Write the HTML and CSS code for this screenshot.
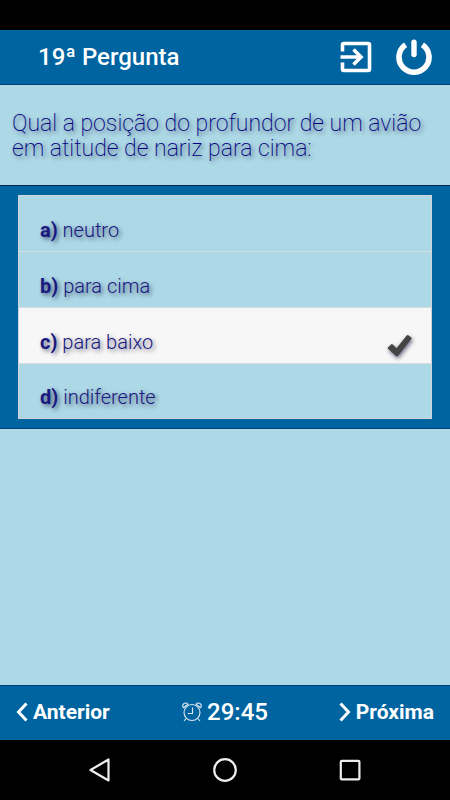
FILE: index.html
```html
<!DOCTYPE html>
<html lang="pt-BR">
<head>
<meta charset="utf-8">
<meta name="viewport" content="width=device-width, initial-scale=1">
<title>19ª Pergunta</title>
<link rel="stylesheet" href="styles.css">
</head>
<body>
<div class="status-bar"></div>
<header class="header">
  <h1 class="title">19ª Pergunta</h1>
  <button class="icon-button" type="button" aria-label="Sair">
    <svg width="32" height="32" viewBox="0 0 32 32" fill="none" stroke="#fff" stroke-width="3.6">
      <path d="M2.5 10.5V4Q2.5 2.5 4 2.5H28Q29.5 2.5 29.5 4V28Q29.5 29.5 28 29.5H4Q2.5 29.5 2.5 28V21.5"/>
      <path d="M.5 16H21M13.5 8.5L21 16L13.5 23.5"/>
    </svg>
  </button>
  <button class="icon-button" type="button" aria-label="Desligar">
    <svg width="36" height="36" viewBox="0 0 36 36" fill="none" stroke="#fff">
      <path d="M9.6 5.8A15 15 0 1 0 26.4 5.8" stroke-width="5.6"/>
      <path d="M18 3.3V15.5" stroke-width="5.4" stroke-linecap="round"/>
    </svg>
  </button>
</header>
<main class="content">
  <p class="question" id="question">Qual a posição do profundor de um avião em atitude de nariz para cima:</p>
  <div class="answers">
    <div class="options" role="radiogroup" aria-labelledby="question">
      <label class="option"><input type="radio" name="answer" value="a"><span><b>a)</b> neutro</span></label>
      <label class="option"><input type="radio" name="answer" value="b"><span><b>b)</b> para cima</span></label>
      <label class="option"><input type="radio" name="answer" value="c" checked><span><b>c)</b> para baixo</span>
        <svg class="check" width="26" height="26" viewBox="0 0 26 26" fill="#444"><path d="M1.1 14.2L4.1 11.4Q5 10.8 5.8 11.5L9.5 15.2L19.7 2.4Q20.5 1.5 21.4 2.2L24.1 4.5Q25 5.2 24.3 6.1L11.2 22.5Q9.8 24.2 8.5 22.5L1 15.7Q.3 14.9 1.1 14.2Z"/></svg>
      </label>
      <label class="option"><input type="radio" name="answer" value="d"><span><b>d)</b> indiferente</span></label>
    </div>
  </div>
</main>
<footer class="footer">
  <button class="nav-button" type="button">
    <svg width="12" height="20" viewBox="0 0 12 20" fill="none" stroke="#fff" stroke-width="3"><path d="M10.5 1.5L2.5 10L10.5 18.5"/></svg>Anterior
  </button>
  <div class="timer">
    <svg width="20" height="20" viewBox="0 0 20 20" fill="none" stroke="#dce9f2" stroke-width="1.1">
      <circle cx="10" cy="10.5" r="8"/>
      <path d="M10.5 5.5V11.5H5.8M4.2 16.5L2 19M15.8 16.5L18 19M1.5 5.7C-.8 2.8 3 -.7 6 2.1ZM18.5 5.7C20.8 2.8 17 -.7 14 2.1Z"/>
    </svg>29:45
  </div>
  <button class="nav-button" type="button">
    <svg width="12" height="20" viewBox="0 0 12 20" fill="none" stroke="#fff" stroke-width="3"><path d="M1.5 1.5L9.5 10L1.5 18.5"/></svg>Próxima
  </button>
</footer>
<nav class="system-bar">
  <button class="icon-button" type="button" aria-label="Voltar"><svg width="24" height="26" viewBox="0 0 24 26" fill="none" stroke="#eee" stroke-width="2.2" stroke-linejoin="round"><path d="M20.5 2.5V23.5L2.5 13Z"/></svg></button>
  <button class="icon-button" type="button" aria-label="Início"><svg width="26" height="26" viewBox="0 0 26 26" fill="none" stroke="#eee" stroke-width="2.2"><circle cx="13" cy="13" r="10.8"/></svg></button>
  <button class="icon-button" type="button" aria-label="Recentes"><svg width="24" height="26" viewBox="0 0 24 26" fill="none" stroke="#eee" stroke-width="2.2"><rect x="2.8" y="3.8" width="18.6" height="18.6" rx="1"/></svg></button>
</nav>
</body>
</html>
```
FILE: styles.css
```css
* {
  box-sizing: border-box;
}

body {
  margin: 0;
  min-height: 100vh;
  display: flex;
  flex-direction: column;
  background: #add8e6;
  font-family: Roboto, "Liberation Sans", sans-serif;
}

button {
  padding: 0;
  border: 0;
  background: none;
  color: inherit;
  font: inherit;
}

svg {
  display: block;
  flex: none;
}

.status-bar {
  height: 30px;
  background: #000;
}

.header {
  display: flex;
  align-items: center;
  gap: 24px;
  padding: 8px 18px 8px 38px;
  border-bottom: 1px solid #003c7d;
  background: #0064a0;
  color: #fff;
}

.title {
  flex: 1;
  margin: 0;
  font-size: 24px;
  font-weight: 500;
  line-height: 38px;
}

.content {
  flex: 1;
}

.question {
  margin: 0;
  padding: 26px 12px 24px;
  color: #000080;
  font-size: 23px;
  font-weight: 200;
  line-height: 25px;
  text-shadow: 2px 2px 4px rgba(0, 0, 50, 0.6);
}

.answers {
  padding: 9px 18px;
  border-top: 1px solid #00205c;
  border-bottom: 1px solid #00457e;
  background: #0064a0;
}

.options {
  border: 1px solid #d0d4da;
}

.option {
  position: relative;
  display: flex;
  align-items: center;
  justify-content: space-between;
  height: 56px;
  padding: 12px 18px 0 21px;
  border-bottom: 1px solid #d4dde1;
  background: #add8e6;
  color: #191980;
  font-size: 20px;
  font-weight: 300;
  text-shadow: 2px 2px 4px rgba(0, 0, 50, 0.6);
}

.option:last-child {
  height: 54px;
  border-bottom: 0;
}

.option:has(input:checked) {
  background: #f7f7f7;
}

.option input {
  position: absolute;
  opacity: 0;
}

.option b {
  font-weight: 700;
}

.check {
  align-self: flex-end;
  margin-bottom: 4px;
  filter: drop-shadow(1px 2px 2px rgba(0, 0, 50, 0.6));
}

.footer {
  display: grid;
  grid-template-columns: 1fr auto 1fr;
  align-items: center;
  height: 55px;
  padding: 0 16px 2px;
  border-top: 1px solid #003c7d;
  background: #0064a0;
  color: #fff;
}

.nav-button,
.timer {
  display: flex;
  align-items: center;
  gap: 5px;
}

.nav-button {
  font-size: 21px;
  font-weight: 700;
}

.nav-button:last-child {
  justify-self: end;
}

.timer {
  font-size: 24px;
  font-weight: 500;
}

.system-bar {
  display: flex;
  align-items: center;
  justify-content: center;
  gap: 100px;
  height: 60px;
  background: #000;
}
```
